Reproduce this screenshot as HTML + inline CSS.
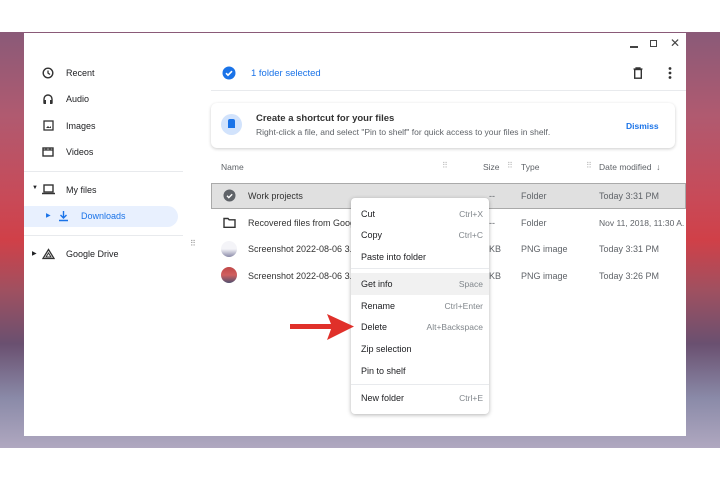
<!DOCTYPE html>
<html><head><style>
*{margin:0;padding:0;box-sizing:border-box}
body{width:720px;height:480px;position:relative;overflow:hidden;background:#fff;font-family:"Liberation Sans",sans-serif;font-size:9px;color:#202124}
.bg{position:absolute;left:0;top:32px;width:720px;height:416px;background:linear-gradient(180deg,#8a5a78 0%,#b05a70 20%,#c84a58 40%,#d04048 50%,#a05060 62%,#6a5070 75%,#8a8aa8 88%,#b0a8c0 100%)}
.win{position:absolute;left:24px;top:33px;width:662px;height:403px;background:#fff}
.a{position:absolute;white-space:nowrap}
.g{color:#5f6368}
.menu{position:absolute;left:351px;top:198px;width:138px;height:216px;background:#fff;border-radius:4px;box-shadow:0 1px 4px rgba(0,0,0,.3)}
.mi{position:absolute;left:10px;font-size:9px}
.ms{position:absolute;right:6px;font-size:8.5px;color:#80868b}
</style></head><body>
<div class="bg"></div>
<div class="win"></div>
<div class="a" style="left:630px;top:46px;width:8px;height:1.5px;background:#444"></div>
<div class="a" style="left:650px;top:40px;width:7px;height:7px;border:1.5px solid #444"></div>
<div class="a g" style="left:670px;top:36px;font-size:12px;color:#444">✕</div>
<svg class="a" style="left:42px;top:67px" width="12" height="12"><circle cx="6" cy="6" r="4.8" fill="none" stroke="#333" stroke-width="1.4"/><path d="M6 3.5V6l2 1.5" stroke="#333" stroke-width="1.3" fill="none"/></svg>
<div class="a" style="left:66px;top:68px">Recent</div>
<svg class="a" style="left:42px;top:93px" width="12" height="12"><path d="M2 10V6a4 4 0 0 1 8 0v4" fill="none" stroke="#333" stroke-width="1.4"/><rect x="1.5" y="7" width="2.5" height="4" fill="#333"/><rect x="8" y="7" width="2.5" height="4" fill="#333"/></svg>
<div class="a" style="left:66px;top:94px">Audio</div>
<svg class="a" style="left:43px;top:120px" width="11" height="11"><rect x="1" y="1" width="9" height="9" fill="none" stroke="#333" stroke-width="1.3"/><path d="M3 8l2-2 1.5 1.5L8 6v2z" fill="#333"/></svg>
<div class="a" style="left:66px;top:121px">Images</div>
<svg class="a" style="left:42px;top:146px" width="12" height="12"><rect x="1" y="2" width="10" height="8" fill="none" stroke="#333" stroke-width="1.4"/><path d="M1 4h10M4 2v2M8 2v2" stroke="#333" stroke-width="1.3"/></svg>
<div class="a" style="left:66px;top:147px">Videos</div>
<div class="a" style="left:24px;top:171px;width:159px;height:1px;background:#e8eaed"></div>
<div class="a" style="left:32px;top:185px;font-size:6px">▼</div>
<svg class="a" style="left:42px;top:184px" width="13" height="11"><rect x="2" y="1" width="9" height="7" fill="none" stroke="#333" stroke-width="1.4"/><path d="M0 9.5h13" stroke="#333" stroke-width="1.5"/></svg>
<div class="a" style="left:66px;top:185px">My files</div>
<div class="a" style="left:24px;top:206px;width:154px;height:21px;background:#e8f0fe;border-radius:0 11px 11px 0"></div>
<div class="a" style="left:46px;top:212px;font-size:6px;color:#1a73e8">▶</div>
<svg class="a" style="left:58px;top:210px" width="11" height="12"><path d="M5.5 1v7M2.5 5l3 3 3-3M1 10.5h9" stroke="#1a73e8" stroke-width="1.4" fill="none"/></svg>
<div class="a" style="left:81px;top:211px;color:#1a73e8">Downloads</div>
<div class="a" style="left:24px;top:235px;width:159px;height:1px;background:#e8eaed"></div>
<div class="a" style="left:32px;top:250px;font-size:6px">▶</div>
<svg class="a" style="left:42px;top:248px" width="13" height="12"><path d="M6.5 1.5L12 10.5H1z" fill="none" stroke="#333" stroke-width="1.3"/><path d="M6.5 5L9 9H4z" fill="none" stroke="#333" stroke-width="1"/></svg>
<div class="a" style="left:66px;top:249px">Google Drive</div>
<div class="a" style="left:190px;top:239px;font-size:8px;color:#999;letter-spacing:-1px">⠿</div>
<svg class="a" style="left:222px;top:66px" width="14" height="14"><circle cx="7" cy="7" r="6.5" fill="#1a73e8"/><path d="M4 7.2l2 2 4-4" stroke="#fff" stroke-width="1.6" fill="none"/></svg>
<div class="a" style="left:251px;top:68px;color:#1a73e8;font-size:9.5px">1 folder selected</div>
<svg class="a" style="left:633px;top:67px" width="10" height="12"><path d="M0.5 2h9M3 2V0.8h4V2" stroke="#333" stroke-width="1.2" fill="none"/><rect x="1.7" y="2.5" width="6.6" height="8.7" fill="none" stroke="#333" stroke-width="1.4"/></svg>
<svg class="a" style="left:667px;top:66px" width="6" height="14"><circle cx="3" cy="2.5" r="1.4" fill="#333"/><circle cx="3" cy="7" r="1.4" fill="#333"/><circle cx="3" cy="11.5" r="1.4" fill="#333"/></svg>
<div class="a" style="left:211px;top:90px;width:475px;height:1px;background:#e8eaed"></div>
<div class="a" style="left:211px;top:103px;width:464px;height:45px;border-radius:6px;box-shadow:0 1px 3px rgba(0,0,0,.2);background:#fff"></div>
<div class="a" style="left:221px;top:114px;width:21px;height:21px;border-radius:50%;background:#d2e3fc"></div>
<div class="a" style="left:228px;top:119px;width:7px;height:9px;background:#1a73e8;border-radius:2px 2px 0 0"></div>
<div class="a" style="left:256px;top:113px;font-size:9.5px;font-weight:bold;color:#333">Create a shortcut for your files</div>
<div class="a g" style="left:256px;top:127px;font-size:8.5px">Right-click a file, and select "Pin to shelf" for quick access to your files in shelf.</div>
<div class="a" style="left:626px;top:121px;color:#1a73e8;font-size:8.5px;font-weight:bold">Dismiss</div>
<div class="a g" style="left:221px;top:162px;font-size:8.5px">Name</div>
<div class="a" style="left:442px;top:161px;color:#bbb;font-size:8px">⠿</div>
<div class="a g" style="left:483px;top:162px;font-size:8.5px">Size</div>
<div class="a" style="left:507px;top:161px;color:#bbb;font-size:8px">⠿</div>
<div class="a g" style="left:521px;top:162px;font-size:8.5px">Type</div>
<div class="a" style="left:586px;top:161px;color:#bbb;font-size:8px">⠿</div>
<div class="a g" style="left:599px;top:162px;font-size:8.5px">Date modified &nbsp;↓</div>
<div class="a" style="left:211px;top:183px;width:475px;height:26px;background:#e0e0e0;border:1px solid #aaa"></div>
<svg class="a" style="left:223px;top:189px" width="13" height="13"><circle cx="6.5" cy="6.5" r="6" fill="#5f6368"/><path d="M4 6.8l1.8 1.8 3.4-3.4" stroke="#fff" stroke-width="1.4" fill="none"/></svg>
<div class="a" style="left:248px;top:191px;color:#333">Work projects</div>
<div class="a g" style="left:489px;top:191px">--</div>
<div class="a g" style="left:521px;top:191px">Folder</div>
<div class="a g" style="left:599px;top:191px">Today 3:31 PM</div>
<svg class="a" style="left:223px;top:217px" width="13" height="11"><path d="M1 1.5h4l1.2 1.3H12v7.5H1z" fill="none" stroke="#333" stroke-width="1.4"/></svg>
<div class="a" style="left:248px;top:218px;color:#333">Recovered files from Googl</div>
<div class="a g" style="left:489px;top:218px">--</div>
<div class="a g" style="left:521px;top:218px">Folder</div>
<div class="a g" style="left:599px;top:218px;width:85px;overflow:hidden;font-size:8.5px">Nov 11, 2018, 11:30 A...</div>
<div class="a" style="left:221px;top:241px;width:16px;height:16px;border-radius:50%;background:linear-gradient(#f4f4f8 50%,#8a8aa8)"></div>
<div class="a" style="left:248px;top:244px;color:#333">Screenshot 2022-08-06 3.31</div>
<div class="a g" style="left:489px;top:244px">KB</div>
<div class="a g" style="left:521px;top:244px">PNG image</div>
<div class="a g" style="left:599px;top:244px">Today 3:31 PM</div>
<div class="a" style="left:221px;top:267px;width:16px;height:16px;border-radius:50%;background:linear-gradient(#c04848,#d06060 50%,#505070)"></div>
<div class="a" style="left:248px;top:271px;color:#333">Screenshot 2022-08-06 3.26</div>
<div class="a g" style="left:489px;top:271px">KB</div>
<div class="a g" style="left:521px;top:271px">PNG image</div>
<div class="a g" style="left:599px;top:271px">Today 3:26 PM</div>
<div class="menu">
<div class="mi" style="top:11px">Cut</div><div class="ms" style="top:11px">Ctrl+X</div>
<div class="mi" style="top:32px">Copy</div><div class="ms" style="top:32px">Ctrl+C</div>
<div class="mi" style="top:54px">Paste into folder</div>
<div style="position:absolute;left:0;top:70px;width:138px;height:1px;background:#e8eaed"></div>
<div style="position:absolute;left:0;top:75px;width:138px;height:22px;background:#f1f1f1"></div>
<div class="mi" style="top:81px">Get info</div><div class="ms" style="top:81px">Space</div>
<div class="mi" style="top:103px">Rename</div><div class="ms" style="top:103px">Ctrl+Enter</div>
<div class="mi" style="top:124px">Delete</div><div class="ms" style="top:124px">Alt+Backspace</div>
<div class="mi" style="top:146px">Zip selection</div>
<div class="mi" style="top:168px">Pin to shelf</div>
<div style="position:absolute;left:0;top:186px;width:138px;height:1px;background:#e8eaed"></div>
<div class="mi" style="top:195px">New folder</div><div class="ms" style="top:195px">Ctrl+E</div>
</div>
<svg class="a" style="left:290px;top:312px" width="66" height="30"><rect x="0" y="12" width="42" height="5" fill="#e0302a"/><path d="M37 2L64 14.5 37 28l5-13.5z" fill="#e0302a"/></svg>
</body></html>
